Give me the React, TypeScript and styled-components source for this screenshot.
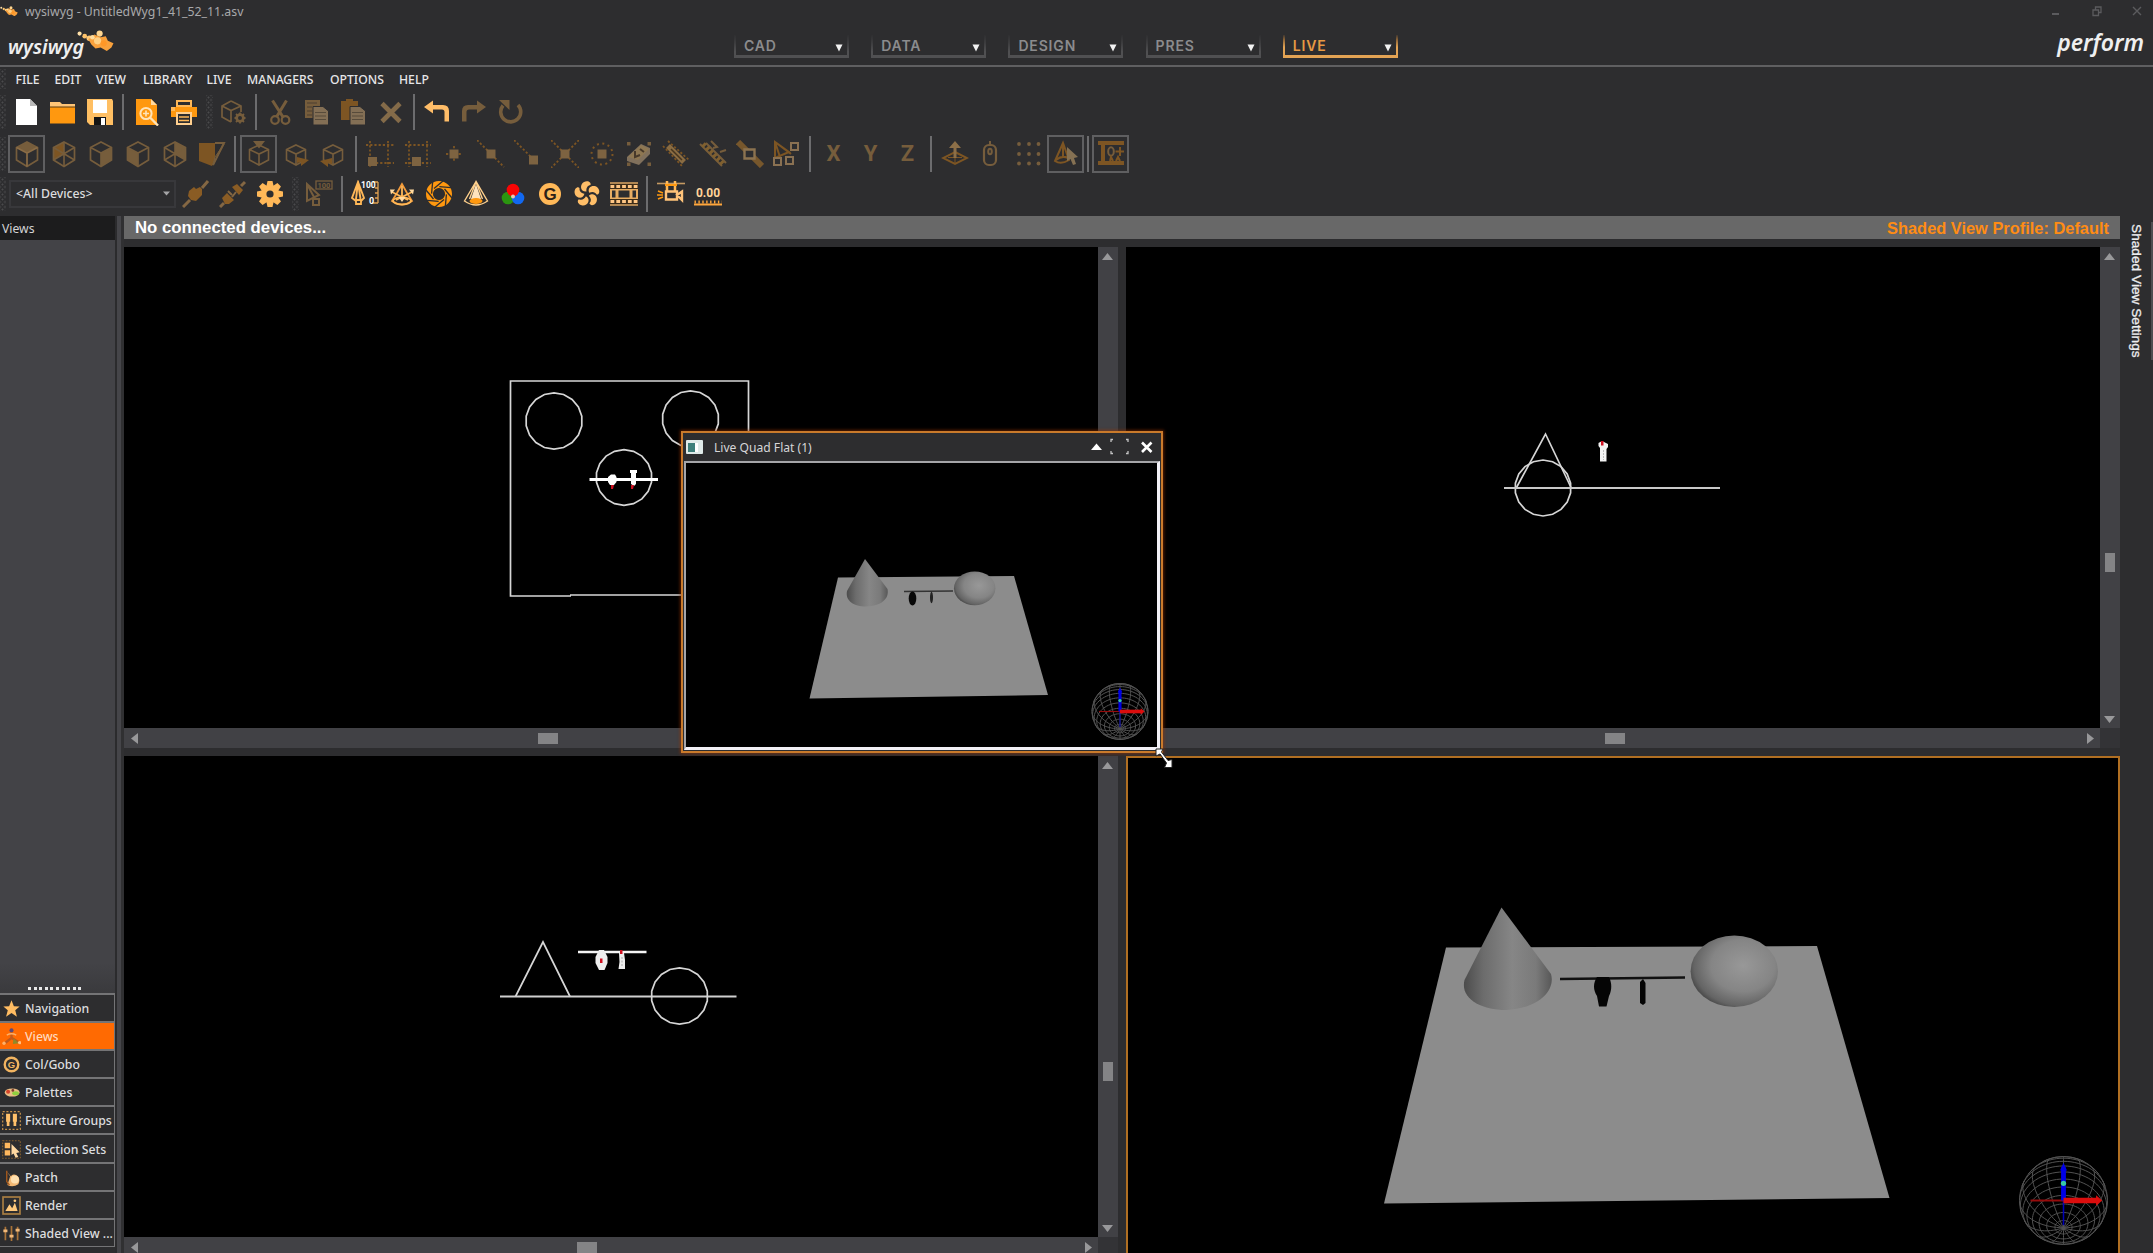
import React from "react";
import styled, { createGlobalStyle, css } from "styled-components";

const UI = `"Noto Sans", "Open Sans", sans-serif`;
const ARIAL = `"Liberation Sans", Arial, sans-serif`;
const BG = "#2d2d2f";
const BRIGHT = "#ff980f";
const PALE = "#ffb858";
const DIM = "#765d3c";
const RUST = "#7d5523";

const GlobalStyle = createGlobalStyle`
  *, *::before, *::after { box-sizing: border-box; }
  body { margin: 0; background: ${BG}; overflow: hidden; }
`;

const AppFrame = styled.div`
  display: flex;
  flex-direction: column;
  width: 2153px;
  height: 1253px;
  overflow: hidden;
  background: ${BG};
  color: #e4e4e6;
  font-family: ${UI};
  position: relative;
`;

/* ---------- header ---------- */
const TitleBar = styled.div`
  height: 23px;
  flex: none;
  display: flex;
  align-items: center;
  justify-content: space-between;
  padding-right: 10px;
  padding-bottom: 1px;
  color: #a9a9ab;
  font-size: 12.3px;
`;
const TitleLeft = styled.div`
  display: flex;
  align-items: center;
  gap: 7px;
`;
const WindowButtons = styled.div`
  display: flex;
  gap: 29px;
  color: #5b5b5e;
`;
const BrandBar = styled.div`
  height: 44px;
  flex: none;
  display: flex;
  justify-content: space-between;
  border-bottom: 2px solid #5f5f61;
  padding: 0 9px 0 8px;
`;
const Logo = styled.div`
  display: flex;
  width: 121px;
  svg { flex: none; margin: 7px 0 0 -7px; }
`;
const LogoText = styled.span<{ $size: number; $top: number }>`
  font-style: italic;
  font-weight: 600;
  font-size: ${(p) => p.$size}px;
  line-height: 26px;
  padding-top: ${(p) => p.$top}px;
  color: #efefef;
`;
const Tabs = styled.div`
  display: flex;
  gap: 22.2px;
  margin-left: 75px;
  margin-right: auto;
  padding: 12px 0 0 530px;
`;
const Tab = styled.div<{ $active?: boolean }>`
  width: 115px;
  height: 23px;
  padding: 0 4px 0 8px;
  display: flex;
  align-items: center;
  justify-content: space-between;
  border: solid ${(p) => (p.$active ? "#e0a050" : "#4c4c4e")};
  border-width: 0 2px 3px 2px;
  border-image: ${(p) =>
    p.$active
      ? "linear-gradient(to top, #e3a354 40%, #8a6236 75%, transparent) 1"
      : "linear-gradient(to top, #505052 20%, #3c3c3e 60%, transparent) 1"};
  color: ${(p) => (p.$active ? "#e79a43" : "#8b8b8d")};
  font-family: Inter, sans-serif;
  font-weight: 600;
  font-size: 14px;
  letter-spacing: 0.85px;
  svg { margin-top: 5px; }
`;

/* ---------- menus and toolbars ---------- */
const gripDots = css`
  background-image: radial-gradient(circle, #4a4a4c 0.9px, transparent 1.1px),
    radial-gradient(circle, #4a4a4c 0.9px, transparent 1.1px);
  background-size: 5px 5px;
  background-position: 0 0, 2.5px 2.5px;
`;
const MenuBar = styled.div`
  height: 24px;
  flex: none;
  display: flex;
  align-items: center;
`;
const MenuItem = styled.span<{ $w: number }>`
  width: ${(p) => p.$w}px;
  font-size: 12.2px;
  font-weight: 500;
  color: #e6e6e8;
`;
const Toolbar = styled.div<{ $h: number }>`
  height: ${(p) => p.$h}px;
  flex: none;
  display: flex;
  align-items: center;
`;
const EdgeGrip = styled.div<{ $h: number; $gap: number }>`
  width: 6px;
  height: ${(p) => p.$h}px;
  margin-right: ${(p) => p.$gap}px;
  ${gripDots}
`;
const Grip = styled.div`
  width: 7px;
  height: 34px;
  margin: 0 1px 0 4px;
  ${gripDots}
`;
const Sep = styled.div<{ $w?: number }>`
  width: ${(p) => p.$w ?? 10}px;
  height: 36px;
  display: flex;
  justify-content: center;
  &::after { content: ""; width: 2px; background: #6c6c6e; }
`;
const ToolButton = styled.div<{ $boxed?: boolean }>`
  width: 37px;
  height: 38px;
  flex: none;
  display: flex;
  align-items: center;
  justify-content: center;
  ${(p) => p.$boxed && css`box-shadow: inset 0 0 0 2px #5f5f61;`}
`;
const DeviceSelect = styled.div`
  width: 167px;
  height: 28px;
  border: 2px solid #38383b;
  display: flex;
  align-items: center;
  justify-content: space-between;
  padding: 0 4px 0 5px;
  font-size: 12.3px;
  font-weight: 500;
  color: #dcdcde;
  margin-right: 1px;
`;
const ToolbarFoot = styled.div`
  height: 3px;
  flex: none;
`;

/* ---------- work area ---------- */
const Work = styled.div`
  flex: 1;
  min-height: 0;
  display: flex;
`;
const Sidebar = styled.div`
  width: 115px;
  flex: none;
  display: flex;
  flex-direction: column;
  background: #434347;
`;
const SidebarTitle = styled.div`
  height: 24px;
  background: #1c1c1d;
  padding-left: 2px;
  font-size: 12.2px;
  line-height: 26px;
  color: #d4d4d6;
`;
const SidebarBody = styled.div`
  flex: 1;
  display: flex;
  align-items: flex-end;
  padding: 0 0 3px 27px;
  background: linear-gradient(#434347 96%, #3a3a3d);
`;
const Dots = styled.div`
  width: 55px;
  height: 3px;
  background: repeating-linear-gradient(90deg, transparent 0 1px, #e8e8e8 1px 4px, transparent 4px 5.6px);
`;
const NavList = styled.div`
  height: 254px;
  border: solid #747476;
  border-width: 2px 1px 0 0;
  flex: none;
`;
const NavRow = styled.div<{ $active?: boolean }>`
  height: 28.1px;
  display: flex;
  align-items: center;
  gap: 4px;
  padding: 1px 0 0 2px;
  border-bottom: 2px solid #747476;
  background: ${(p) => (p.$active ? "#ff6a02" : BG)};
  color: ${(p) => (p.$active ? "#ffd9bd" : "#dddddf")};
  font-size: 12.3px;
  font-weight: 500;
  white-space: nowrap;
  overflow: hidden;
`;
const SidebarFoot = styled.div`
  height: 6px;
  background: ${BG};
`;
const Splitter = styled.div`
  width: 9px;
  flex: none;
  background: linear-gradient(90deg, #2b2b2d 0 2px, #454549 2px 6px, #303032 6px);
`;
const Main = styled.div`
  width: 1996px;
  flex: none;
  display: flex;
  flex-direction: column;
  gap: 8px;
`;
const StatusBar = styled.div`
  height: 23px;
  flex: none;
  display: flex;
  align-items: center;
  justify-content: space-between;
  padding: 1px 11px 0;
  background: #686868;
  font-family: ${ARIAL};
  font-weight: 700;
  font-size: 16.8px;
  color: #ffffff;
`;
const ProfileLabel = styled.span`
  color: #ff8c14;
  font-size: 16.4px;
`;
const Quad = styled.div`
  display: grid;
  grid-template-columns: 994px 994px;
  grid-template-rows: 501px 501px;
  gap: 8px;
`;
const Pane = styled.div`
  display: grid;
  grid-template-columns: 974px 20px;
  grid-template-rows: 1fr 20px;
  background: #333336;
  overflow: hidden;
`;
const ActivePane = styled.div`
  border: 2px solid #b06f22;
  background: #000;
  overflow: hidden;
`;
const Canvas = styled.svg`
  display: block;
  background: #000;
`;
const VScroll = styled.div`
  background: #414145;
  display: flex;
  flex-direction: column;
  align-items: center;
  padding: 6px 1px 5px 0;
`;
const HScroll = styled.div`
  background: #414145;
  display: flex;
  align-items: center;
  padding: 0 6px 0 7px;
`;
const Thumb = styled.div<{ $w: number; $h: number }>`
  width: ${(p) => p.$w}px;
  height: ${(p) => p.$h}px;
  flex: none;
  background: #848486;
`;
const Space = styled.div<{ $n?: number }>`
  flex: ${(p) => (p.$n === undefined ? "1" : `0 0 ${p.$n}px`)};
`;
const RightRail = styled.div`
  flex: 1;
  display: flex;
  justify-content: space-between;
  padding: 6px 0 0 7px;
`;
const RailTab = styled.div`
  writing-mode: vertical-rl;
  font-family: ${ARIAL};
  font-size: 13.7px;
  line-height: 18px;
  height: 140px;
  padding-top: 2px;
  color: #eeeeef;
  -webkit-text-stroke: 0.3px #eeeeef;
`;
const RailEdge = styled.div`
  width: 2px;
  height: 138px;
  background: #4e4e51;
`;

/* ---------- floating window ---------- */
const Floating = styled.div`
  position: absolute;
  left: 681px;
  top: 431px;
  width: 482px;
  height: 322px;
  border: 2px solid #c97a2b;
  background: ${BG};
  box-shadow: 0 0 3px 1px rgba(150, 50, 0, 0.6);
  padding: 0 1px 1px 1px;
`;
const FloatTitle = styled.div`
  height: 28px;
  display: flex;
  align-items: center;
  padding: 0 5px 1px 2px;
  font-size: 12.1px;
  color: #d6d6d8;
  span { margin: 1px auto 0 11px; }
`;
const FloatBody = styled.div`
  height: 289px;
  border: solid #a5a5a8;
  border-width: 2px 3px 3px 2px;
  border-right-color: #f2f0f6;
  border-bottom-color: #f2f0f6;
  background: #000;
  overflow: hidden;
`;
const Pointer = styled.svg`
  position: absolute;
  left: 1155px;
  top: 748px;
`;

/* ---------- icon drawings ---------- */
const Svg = ({ children, s = 28 }: { children: React.ReactNode; s?: number }) => (
  <svg width={s} height={s} viewBox="0 0 28 28" fill="none">{children}</svg>
);
const HEX = "M14 2L24.5 7.5V20L14 26.5L3.5 20V7.5Z";
const FACE: Record<string, string> = {
  top: "M14 2L24.5 7.5L14 12.5L3.5 7.5Z",
  right: "M14 13L24.5 7.5V20L14 26.5Z",
  left: "M14 13L3.5 7.5V20L14 26.5Z",
  backLeft: "M14 2L3.5 7.5V20L14 14.5Z",
  backRight: "M14 2L24.5 7.5V20L14 14.5Z",
};
const Cube = ({ face, back }: { face?: string; back?: boolean }) => (
  <Svg>
    {face && <path d={FACE[face]} fill={face === "backLeft" ? RUST : DIM} />}
    <path d={HEX} stroke={DIM} strokeWidth="1.7" />
    {back ? (
      <path d="M14 2V26.5M3.5 20L24.5 7.5M3.5 7.5L24.5 20" stroke={DIM} strokeWidth="1.6" />
    ) : (
      <path d="M3.5 7.5L14 13L24.5 7.5M14 13V26.5" stroke={face === "top" ? "#8a6c46" : DIM} strokeWidth="1.7" />
    )}
  </Svg>
);
const SmallCube = ({ children }: { children?: React.ReactNode }) => (
  <Svg>
    <path d="M14 5L23.5 9.5V20L14 25L4.5 20V9.5ZM4.5 9.5L14 14L23.5 9.5M14 14V25" stroke={DIM} strokeWidth="1.6" />
    {children}
  </Svg>
);
const dash = { stroke: RUST, strokeWidth: 1.8, strokeDasharray: "2.2 2" };
const Letter = styled.span`
  font-family: Roboto, sans-serif;
  font-weight: 700;
  font-size: 22px;
  line-height: 37px;
  color: ${DIM};
`;

const I: Record<string, React.ReactNode> = {
  fresh: <Svg><path d="M4 1H18L25 8V27H4Z" fill="#fff" /><path d="M18 1V8H25Z" fill="#b9b9b9" /></Svg>,
  open: <Svg><path d="M1 4H11L13 6H26V10H1Z" fill="#ffc577" /><path d="M1 9H26V25.5H1Z" fill={BRIGHT} /><path d="M1 9H26" stroke="#5a3a10" strokeWidth="1" /></Svg>,
  save: <Svg><path d="M1 1H26L27 3V27H4L1 24Z" fill="#ffbf63" /><path d="M7 2H21V15H7Z" fill="#fff" /><path d="M8 19H20V27H8Z" fill="#141414" /><path d="M15 20H19V27H15Z" fill="#fff" /></Svg>,
  preview: <Svg><path d="M3 1H18L24 7V27H3Z" fill={BRIGHT} /><path d="M18 1V7H24Z" fill="#ffd9a0" /><circle cx="13" cy="15.5" r="5.6" stroke="#ffe3b8" strokeWidth="2" /><path d="M13 12.5V18.5M10 15.5H16" stroke="#ffe3b8" strokeWidth="1.6" /><path d="M17 19.5L25 27.5" stroke="#ffe3b8" strokeWidth="2.4" /></Svg>,
  print: <Svg><path d="M7 3H21V8H7Z" stroke={PALE} strokeWidth="2" fill={BG} /><path d="M1 9H27V19H1Z" fill={BRIGHT} /><path d="M1 9H5V13H1Z" fill={PALE} /><path d="M7 15H21V26H7Z" fill={BG} stroke="#ffcf8f" strokeWidth="2" /><path d="M9 19H19M9 22.5H19" stroke={PALE} strokeWidth="1.3" /></Svg>,
  cubegear: <Svg><path d="M12 3L22 8V14M12 3L3 8V19L12 24M3 8L12 12.5L22 8M12 12.5V24" stroke={DIM} strokeWidth="1.7" /><circle cx="21" cy="20" r="3.5" stroke={DIM} strokeWidth="2.4" /><path d="M21 14.5V25.5M15.5 20H26.5M17 16L25 24M25 16L17 24" stroke={DIM} strokeWidth="1.8" /><circle cx="21" cy="20" r="2" fill={BG} /></Svg>,
  cut: <Svg><path d="M6.5 2.5L17 19M20.5 2.5L10.5 19" stroke={DIM} strokeWidth="3" /><circle cx="9" cy="22" r="3.8" stroke={DIM} strokeWidth="2.2" /><circle cx="19.5" cy="22" r="3.8" stroke={DIM} strokeWidth="2.2" /></Svg>,
  copy: <Svg><path d="M2 2H17V8H10V20H2Z" fill={DIM} /><path d="M4 5H14M4 9H9M4 13H9M4 17H9" stroke="#4b3f30" /><path d="M10 8.500H20L25.500 13V27H10Z" fill="#836f55" stroke={BG} /><path d="M12 14.500H23M12 18H23M12 21.500H23" stroke="#574b3b" strokeWidth="1.2" /></Svg>,
  paste: <Svg><path d="M1 3H6V1H13V3H18V8H11V22H1Z" fill={RUST} /><path d="M10 8.500H20L25.500 13V27H10Z" fill="#836f55" stroke={BG} /><path d="M12 14.500H23M12 18H23M12 21.500H23" stroke="#574b3b" strokeWidth="1.2" /></Svg>,
  del: <Svg><path d="M5 5.500L23 23.500M23 5.500L5 23.500" stroke="#846b49" strokeWidth="4.6" /></Svg>,
  undo: <Svg><path d="M1 9L10 2.500V7H20Q26 7 26 13V23.500H21.500V14Q21.500 11.500 19 11.500H10V15.500Z" fill="#ffbd68" /></Svg>,
  redo: <Svg><path d="M26 9L17 2.500V7H8Q2 7 2 13V23.500H6.500V14Q6.500 11.500 9 11.500H17V15.500Z" fill={DIM} /></Svg>,
  reload: <Svg><path d="M6 7.500A10 10 0 1 0 21 7" stroke={DIM} strokeWidth="3.6" /><path d="M2 2H12.500V12Z" fill={DIM} /></Svg>,
  solid: <Svg><path d="M1 3H17V21L14 26L1 21Z" fill={RUST} /><path d="M17 3H26L15 25" stroke={DIM} strokeWidth="2" /><path d="M17 17L15 25L26 4Z" stroke={DIM} /></Svg>,
  viewTop: <SmallCube><path d="M8 1H20L14 8.500Z" fill={DIM} /></SmallCube>,
  viewFront: <SmallCube><path d="M15 17L27 20L19 26V22L15 23Z" fill={RUST} /></SmallCube>,
  viewSide: <SmallCube><path d="M13 18L1 21L9 27V23L13 24Z" fill={RUST} /></SmallCube>,
  boxA: <Svg><path d="M4 1V27M22 1V27M0 5H28M10 23H28" {...dash} /><path d="M2 17H11V26H2Z" fill="#7d6341" /></Svg>,
  boxB: <Svg><path d="M6 1V27M24 1V27M2 5H28M2 23H28" {...dash} /><path d="M9 17H18V26H9Z" fill="#7d6341" /></Svg>,
  snapPt: <Svg><path d="M14 6V22M6 14H22" {...dash} /><path d="M9.500 9.500H18.500V18.500H9.500Z" fill="#7d6341" /></Svg>,
  snapLine: <Svg><path d="M0 0L27 27" {...dash} /><path d="M9.500 9.500H18.500V18.500H9.500Z" fill="#7d6341" /></Svg>,
  snapEnd: <Svg><path d="M0 0L20 20" {...dash} /><path d="M15 15.500H24V24.500H15Z" fill="#7d6341" /></Svg>,
  snapX: <Svg><path d="M0 0L28 28M28 0L0 28" {...dash} /><path d="M9.500 9.500H18.500V18.500H9.500Z" fill="#7d6341" /></Svg>,
  snapC: <Svg><circle cx="14" cy="14" r="10.500" stroke={RUST} strokeWidth="2" strokeDasharray="2 3.500" /><path d="M9.500 9.500H18.500V18.500H9.500Z" fill="#7d6341" /></Svg>,
  grab: <Svg><path d="M2 2H5.500V5.500H2ZM22.500 2H26V5.500H22.500ZM2 22.500H5.500V26H2ZM22.500 22.500H26V26H22.500Z" fill={DIM} /><path d="M2 17L16 4L25 8V14L14 25L2 21Z" fill="#80705c" /><path d="M3 17L16 5L24 9L13 20Z" fill="#8e7752" /><path d="M10 11L10 17L15 15M15 9L19 12" stroke="#47392a" strokeWidth="2" /></Svg>,
  pen: <Svg><path d="M6 6L22 22" stroke="#8a6c42" strokeWidth="5.500" /><path d="M9 9L20 20" stroke="#46351e" strokeWidth="1.500" /><path d="M6 1L27 20M1 6L20 26" {...dash} /></Svg>,
  truss: <Svg><path d="M1 4L23 26M7 3L27 23M12 1L18 7L14 8M27 10L21 12" stroke={DIM} strokeWidth="2" /><path d="M4 4L24 24" stroke="#80602f" strokeWidth="5" strokeDasharray="3 2" /></Svg>,
  pipe: <Svg><path d="M2 2L26 26" stroke="#77572c" strokeWidth="6" /><path d="M8.500 9.500H18.500V18.500H8.500Z" stroke="#8c7350" strokeWidth="2.400" fill={BG} /></Svg>,
  shape: <Svg><path d="M2 2V18L16 12ZM2 2L8 20M2 2L18 14" stroke={RUST} strokeWidth="2" /><path d="M18 3H25V10H18ZM1 18H8V25H1ZM13 17H20V24H13Z" stroke="#8a7152" strokeWidth="2" fill={BG} /></Svg>,
  lift: <Svg><path d="M14 12L26 18L14 24L2 18Z" stroke={RUST} strokeWidth="2" /><path d="M7 17.500H21M14 12V24" stroke={RUST} /><path d="M14 1L20 8H15.500V18H12.500V8H8Z" fill="#8c6f48" /></Svg>,
  mouse: <Svg><rect x="6" y="5" width="12" height="20" rx="5" stroke={DIM} strokeWidth="2.200" /><path d="M12 1V5" stroke={DIM} strokeWidth="2" /><ellipse cx="12" cy="11.500" rx="1.800" ry="2.800" stroke={DIM} strokeWidth="2" /></Svg>,
  grid: <Svg>{[4, 14, 23.500].map((y) => [4, 14, 23.500].map((x) => <circle key={`${x}-${y}`} cx={x} cy={y} r="1.900" fill={DIM} />))}</Svg>,
  pickCone: <Svg><path d="M11 3L3 21Q9 25 17 20ZM11 3V17M4 20Q10 15 16 18" stroke={RUST} strokeWidth="2" /><path d="M15 7L26 17L22 18L24 24L21 25L18.500 19L15 21Z" fill="#857153" /></Svg>,
  stage: <Svg><path d="M1 1H27V5H8V21H27V25H1V21H4V5H1Z" fill={RUST} /><ellipse cx="14" cy="11.500" rx="2.800" ry="4.200" stroke={DIM} strokeWidth="2" /><path d="M23 7V16M18.500 11.500H27M13 21L14 17L16 21M19 21L21 17L23 21" stroke={RUST} strokeWidth="2" /></Svg>,
  plug: <Svg><path d="M1 27L8 20M20 8L26 1" stroke="#846743" strokeWidth="3" /><path d="M7 11L12 7L14 9L18 7L20 9V15L14 21L9 20L6 16Z" fill="#8a5c24" /></Svg>,
  unplug: <Svg><path d="M1 27L5 23M22 6L26 2" stroke="#846743" strokeWidth="3" /><path d="M13 7L18 4L24 10L20 15ZM3 18L8 13L15 20L10 24H6Z" fill="#8a5c24" /><path d="M9 11L13 15M13 17L17 12" stroke="#846743" strokeWidth="2" /></Svg>,
  gear: <Svg>{[0, 45, 90, 135, 180, 225, 270, 315].map((a) => <path key={a} d="M11.500 1H16.500L18 8H10Z" fill={PALE} transform={`rotate(${a} 14 14)`} />)}<circle cx="14" cy="14" r="9" fill={PALE} /><circle cx="14" cy="14" r="3.600" fill={BG} /></Svg>,
  cursor100: <Svg><path d="M2 4V21L14 15ZM2 4L10 19" stroke={DIM} strokeWidth="2" /><path d="M8 19H14V25H8Z" stroke={DIM} strokeWidth="2" /><rect x="11" y="1" width="16" height="8" stroke={DIM} strokeWidth="1.300" /><text x="12.500" y="7.800" fontSize="7.500" fontFamily="Roboto" fontWeight="700" fill={DIM}>100</text></Svg>,
  intensity: <svg width="30" height="28" viewBox="0 0 30 28" fill="none"><path d="M8 2L2 18L6 21H11L14 18ZM8 2L6 19M8 2L10.500 19" stroke={PALE} strokeWidth="1.900" /><path d="M6 20H11V24H6Z" stroke={PALE} strokeWidth="1.800" fill={BG} /><path d="M28 2V23M23 2H28M25 8H28M25 13H28M25 18H28M22 23H28" stroke="#e0a050" strokeWidth="1.300" /><text x="11" y="8" fontSize="8.500" fontFamily="Roboto" fontWeight="700" fill="#fff">100</text><text x="19" y="24" fontSize="9" fontFamily="Roboto" fontWeight="700" fill="#fff">0</text></svg>,
  pan: <Svg><path d="M14 4L9 13L4 21Q14 28 24 21L19 13Z" stroke="#f29a3a" strokeWidth="1.800" /><ellipse cx="14" cy="21" rx="9" ry="3.600" stroke={PALE} strokeWidth="1.700" /><path d="M4 12L20 20M24 12L8 20M14 6V19" stroke={PALE} strokeWidth="1.800" /><path d="M2 9.500H7L3 14.500ZM26 9.500H21L25 14.500ZM10.500 17H17.500L14 22Z" fill="#ffd9a0" /></Svg>,
  iris: <Svg><circle cx="14" cy="14" r="9.500" stroke={BRIGHT} strokeWidth="7" />{[0, 45, 90, 135, 180, 225, 270, 315].map((a) => <path key={a} d="M9 8.500L18 1" stroke={BG} strokeWidth="1.300" transform={`rotate(${a} 14 14)`} />)}<circle cx="14" cy="14" r="5.600" fill={BG} /></Svg>,
  beam: <Svg><path d="M14 4L9 19Q14 24 19 19Z" fill="#ffe3bd" /><path d="M14 1.500L2.500 21Q14 29 25.500 21ZM14 2L7.500 19M14 2L20.500 19" stroke="#ffd08c" strokeWidth="1.400" /><ellipse cx="14" cy="21" rx="6.500" ry="3" fill={BRIGHT} /></Svg>,
  rgb: <Svg><circle cx="9" cy="18" r="6.300" fill="#2b9610" /><circle cx="19" cy="18" r="6.300" fill="#1268f0" /><circle cx="14" cy="10" r="6.300" fill="#f90505" /><circle cx="14" cy="16.500" r="2" fill="#e9c8b0" /></Svg>,
  gobo: <Svg><circle cx="14" cy="14" r="11" fill={PALE} /><text x="14" y="20.200" textAnchor="middle" fontSize="17" fontFamily="Liberation Sans" fontWeight="700" fill="#2b2118">G</text></Svg>,
  fan: <Svg>{[0, 72, 144, 216, 288].map((a) => <path key={a} d="M13.500 11.500C7 12 6.500 4.500 11 2C15 0 18.500 2.500 17.500 5C14.500 5.500 13 8 13.500 11.500Z" fill="#ffbe68" transform={`rotate(${a} 14 14)`} />)}</Svg>,
  film: <svg width="30" height="28" viewBox="0 0 30 28" fill="none"><path d="M1 2.500H29V25.500H1Z" fill="#3c2c18" /><path d="M1 3H29M1 25H29" stroke="#d9a566" strokeWidth="1.600" /><path d="M1.500 6.500H29M1.500 21.500H29" stroke="#ffc684" strokeWidth="3.200" strokeDasharray="3.800 2" /><path d="M1 9H29V19H1Z" fill="#e8ad62" /><path d="M9.500 10.500H20.500V17.500H9.500ZM3 10.500H6.500V17.500H3ZM23.500 10.500H27V17.500H23.500Z" fill={BG} /></svg>,
  camera: <Svg><path d="M0 3.500H28" stroke="#c59a62" strokeWidth="1.600" /><path d="M10 1V12M18 1V12" stroke={PALE} strokeWidth="2.500" /><path d="M8 5H20" stroke={BRIGHT} strokeWidth="2" /><path d="M9 11.500H20V19.500H9ZM20 15L25 11.500V20Z" stroke="#ffc37a" strokeWidth="2.400" /><path d="M1 11L6 13M0 15H6M1 19L6 17" stroke={BRIGHT} strokeWidth="1.600" /></Svg>,
  number: <Svg><text x="14" y="17" textAnchor="middle" fontSize="12" fontFamily="Roboto" fontWeight="700" fill="#ffd39a">0.00</text><path d="M0 24.500H28" stroke="#ffa63c" strokeWidth="2" /><path d="M0.500 22H28" stroke="#ffa63c" strokeWidth="3" strokeDasharray="1.400 2.500" /></Svg>,
};

/* pixel swarm next to the product name */
const Swarm = ({ w }: { w: number }) => (
  <svg width={w} height={w * 0.6} viewBox="0 0 36 21.6">
    <circle cx="2.500" cy="3.500" r="2" fill="#ffe0a8" /><circle cx="7.500" cy="6" r="2.300" fill="#ffc36a" />
    <circle cx="22" cy="3.500" r="3" fill="#ffd690" /><circle cx="12" cy="8" r="2.700" fill="#ffca78" />
    <path d="M11 9L17 4.500L23 7L28 6L30 10.500L35.500 13L33.500 17L29 20.500L23 17L18 18L14 14Z" fill="#f9a13c" />
    <circle cx="20" cy="10.500" r="3.500" fill="#ffd084" /><circle cx="26" cy="13" r="3" fill="#ff9727" /><circle cx="15" cy="7" r="2.200" fill="#ffdc9c" />
  </svg>
);

const navIcons: React.ReactNode[] = [
  <path d="M14 2L17.500 10.500L26 11L19.500 16.500L22 26L14 20.500L6 26L8.500 16.500L2 11L10.500 10.500Z" fill="#ffbc62" />,
  <g><circle cx="14" cy="5" r="3" fill="#5b4a78" /><path d="M14 8V16L4 24M14 16L24 22" stroke="#c05a1c" strokeWidth="3.500" /><path d="M7 12Q14 8 21 12" stroke="#ffb066" strokeWidth="2" /><path d="M17 17L25 24L16 25Z" fill="#8f8a2a" /><circle cx="3" cy="24" r="2.500" fill="#ffb066" /><circle cx="26" cy="23" r="2.500" fill="#ffc080" /></g>,
  <g><circle cx="14" cy="14" r="10" stroke="#f2b460" strokeWidth="3.500" /><text x="14" y="19" textAnchor="middle" fontSize="14" fontFamily="Liberation Sans" fontWeight="700" fill="#f2b460">G</text></g>,
  <g><ellipse cx="15" cy="14" rx="11" ry="6" fill="#e9bd84" /><circle cx="9" cy="13" r="3" fill="#d6442a" /><ellipse cx="20" cy="15" rx="5" ry="3" fill="#8fcf3f" /><circle cx="16" cy="11" r="2" fill="#7d3b2a" /></g>,
  <g><rect x="1" y="1" width="26" height="26" stroke="#c48f4a" strokeWidth="1.800" strokeDasharray="3 2.500" /><path d="M6 4H12V16H11V22H7V16H6ZM16 4H22V16H21V22H17V16H16Z" fill="#ffc06a" /></g>,
  <g><rect x="1" y="1" width="26" height="26" stroke="#86602f" strokeWidth="1.600" strokeDasharray="2.500 2" /><path d="M4 4H12V12H4ZM4 15H12V23H4Z" fill="#ffb85e" /><path d="M14 6L26 18L21 19L24 25L20 26L17 20L14 22Z" fill="#ffd8a0" /></g>,
  <g><path d="M7 5L12 12L8 25Q16 29 24 24Q28 16 22 11Q16 8 13 12" fill="#f3b873" /><circle cx="19" cy="17" r="6" fill="#ffe0b0" /><path d="M7 4V20L11 25" stroke="#a85a1c" strokeWidth="2" /></g>,
  <g><rect x="1.500" y="1.500" width="25" height="25" stroke="#a87d42" strokeWidth="2.500" /><path d="M5 22L11 12L15 18L19 10L23 22Z" fill="#ffc97c" /><circle cx="19" cy="7" r="2" fill="#ffc97c" /></g>,
  <g stroke="#a87238" strokeWidth="2.500"><path d="M5 4V24M14 3V25M23 4V24" /><path d="M2 10H8M11 18H17M20 9H26" strokeWidth="4" stroke="#f2b878" /></g>,
];
const navLabels = ["Navigation", "Views", "Col/Gobo", "Palettes", "Fixture Groups", "Selection Sets", "Patch", "Render", "Shaded View ..."];

/* ---------- scroll arrows ---------- */
const arrowPath: Record<string, string> = {
  up: "M0 7L5.500 0L11 7Z",
  down: "M0 0L5.500 7L11 0Z",
  left: "M7 0L0 5.500L7 11Z",
  right: "M0 0L7 5.500L0 11Z",
};
const Arrow = ({ dir }: { dir: string }) => {
  const tall = dir === "left" || dir === "right";
  return (
    <svg width={tall ? 7 : 11} height={tall ? 11 : 7}>
      <path d={arrowPath[dir]} fill="#98989a" />
    </svg>
  );
};

/* ---------- 3D drawings ---------- */
type Point = { x: number; y: number; z: number };
const SIN = 0.62;
const COS = Math.sqrt(1 - SIN * SIN);

/* screen y grows downward, so the visible pole lands below the centre */
const project = (lat: number, lon: number): Point => {
  const x = Math.cos(lat) * Math.sin(lon);
  const up = Math.sin(lat);
  const out = Math.cos(lat) * Math.cos(lon);
  return { x, y: SIN * up - COS * out, z: COS * up + SIN * out };
};
const toPath = (pts: Point[]) => {
  let d = "";
  let pen = false;
  pts.forEach((p) => {
    if (p.z < -0.02) { pen = false; return; }
    d += `${pen ? "L" : "M"}${p.x.toFixed(3)} ${p.y.toFixed(3)}`;
    pen = true;
  });
  return d;
};
const steps = Array.from({ length: 73 }, (_, i) => (i / 72) * Math.PI * 2);
const rings = Array.from({ length: 15 }, (_, i) => -Math.PI / 2 + ((i + 1) * Math.PI) / 16)
  .map((lat) => toPath(steps.map((lon) => project(lat, lon))));
const meridians = Array.from({ length: 16 }, (_, i) => (i * Math.PI) / 8)
  .map((lon) => toPath(Array.from({ length: 40 }, (_, k) => project(-Math.PI / 2 + (k * Math.PI) / 39, lon))));

const Globe = ({ cx, cy, r }: { cx: number; cy: number; r: number }) => (
  <g transform={`translate(${cx} ${cy}) scale(${r})`} fill="none">
    <g stroke="#525252" strokeWidth={1 / r}>
      {rings.map((d, i) => <path key={`r${i}`} d={d} />)}
      {meridians.map((d, i) => <path key={`m${i}`} d={d} />)}
      <circle r="1" />
    </g>
    <path d="M0 0V0.560" stroke="#0000b8" strokeWidth="0.035" />
    <path d="M-0.750 0H0" stroke="#960b0b" strokeWidth="0.040" />
    <path d="M0 0V-0.750" stroke="#0000e6" strokeWidth="0.110" />
    <path d="M-0.080 -0.680L0 -0.860L0.080 -0.680Z" fill="#0000e6" />
    <path d="M0 0H0.760" stroke="#dc0d0d" strokeWidth="0.130" />
    <path d="M0.740 -0.120L0.880 0L0.740 0.120Z" fill="#dc0d0d" />
    <circle cy="-0.390" r="0.060" fill="#38c8a8" />
  </g>
);
const Gradients = () => (
  <defs>
    <linearGradient id="cone" x1="0" x2="1" y1="0" y2="0">
      <stop offset="0" stopColor="#4c4c4c" /><stop offset="0.220" stopColor="#6c6c6c" />
      <stop offset="0.550" stopColor="#868686" /><stop offset="0.820" stopColor="#7a7a7a" /><stop offset="1" stopColor="#585858" />
    </linearGradient>
    <radialGradient id="ball" cx="0.600" cy="0.420" r="0.660">
      <stop offset="0" stopColor="#989898" /><stop offset="0.550" stopColor="#858585" />
      <stop offset="0.850" stopColor="#646464" /><stop offset="1" stopColor="#3c3c3c" />
    </radialGradient>
  </defs>
);
const polygon = (cx: number, cy: number, r: number, n = 18) =>
  Array.from({ length: n }, (_, i) => {
    const a = ((i + 0.5) / n) * Math.PI * 2;
    return `${(cx + r * Math.cos(a)).toFixed(1)},${(cy + r * Math.sin(a)).toFixed(1)}`;
  }).join(" ");
const wire = { fill: "none", stroke: "#d6d6d6", strokeWidth: 1.7 };

const PlanView = () => (
  <Canvas width="974" height="481" viewBox="124 247 974 481">
    <path d="M570 595H748.500V381H510.500V596H571" {...wire} />
    <polygon points={polygon(554, 421, 28.200)} {...wire} />
    <polygon points={polygon(690.5, 419, 28.200)} {...wire} />
    <polygon points={polygon(624, 477.500, 27.900)} {...wire} />
    <path d="M589.500 479.500H658" stroke="#fff" strokeWidth="3" />
    <path d="M608 477L611 474.500H615L616.500 477V482L614 485H610L608 482ZM630 470H637V473H636V484L634 486L631 484V473H630Z" fill="#fff" />
    <path d="M611 485H614L613 489H611ZM631 485H634L633 489H631Z" fill="#cc1020" />
  </Canvas>
);
const SideView = () => (
  <Canvas width="974" height="481" viewBox="1126 247 974 481">
    <path d="M1516.500 487.500L1545.500 434L1571 487.500" {...wire} />
    <polygon points={polygon(1543, 488, 28)} {...wire} />
    <path d="M1504 488H1720" stroke="#c8c8c8" strokeWidth="2" />
    <path d="M1598.500 443L1602 441L1608 444V447L1606.500 449V461.500H1600V448L1598.500 446Z" fill="#f2f2f2" />
    <path d="M1603.500 450V460" stroke="#bbb" strokeDasharray="2 1" />
    <path d="M1601 441H1603.500V445.500H1601Z" fill="#d01020" />
  </Canvas>
);
const FrontView = () => (
  <Canvas width="974" height="481" viewBox="124 756 974 481">
    <path d="M515.500 996.500L543 942L570 996.500" {...wire} />
    <path d="M500 996.500H736.500" stroke="#cfcfcf" strokeWidth="2" />
    <polygon points={polygon(679.500, 996, 28.200)} {...wire} />
    <path d="M578 952H646.500" stroke="#f4f4f4" strokeWidth="2.600" />
    <path d="M599 950H604L607.500 957V963L604.500 970H599L595.500 963V957Z" fill="#eee" />
    <path d="M619 953H624L625 960V969H618.500L619.500 962Z" fill="#eee" />
    <path d="M600 958.500H602.500V963H600ZM620 950H622.500V954H620Z" fill="#d01020" />
    <path d="M622 957V967" stroke="#aaa" strokeDasharray="2 1.500" />
  </Canvas>
);
const ShadedView = () => (
  <Canvas width="990" height="497" viewBox="1128 758 990 497">
    <Gradients />
    <path d="M1446 947.500L1817 946L1889.500 1198L1384 1203.500Z" fill="#8c8c8c" />
    <path d="M1501.500 907.500L1464.500 980C1460 998 1480 1010 1506 1010C1536 1009 1556 992 1551 974Z" fill="url(#cone)" />
    <path d="M1560 979L1685 977.500" stroke="#111" strokeWidth="2.300" />
    <path d="M1597 977H1609C1612 983 1612 990 1609 996L1606.500 1006.500H1599L1597 996C1593 990 1593 983 1597 977ZM1640 982L1643 979L1645.500 983V1003L1643 1005L1640 1003Z" fill="#050505" />
    <ellipse cx="1734.300" cy="971.300" rx="43.700" ry="35.800" fill="url(#ball)" />
    <Globe cx={2063.500} cy={1200.500} r={44} />
  </Canvas>
);
const MiniView = () => (
  <Canvas width="473" height="285" viewBox="686 463 473 285">
    <path d="M838 577.500L1014 576L1048 695L809.500 698.500Z" fill="#8c8c8c" />
    <path d="M865 559L847 591C845 601 854 606.500 866 606.500C881 606 889.500 599 887.500 589Z" fill="url(#cone)" />
    <path d="M904 591.500L953 591" stroke="#333" strokeWidth="1.500" />
    <ellipse cx="912.500" cy="598.500" rx="3.800" ry="7" fill="#080808" />
    <ellipse cx="931.500" cy="597.500" rx="1.500" ry="5.800" fill="#222" />
    <ellipse cx="974.700" cy="588.300" rx="20.700" ry="16.900" fill="url(#ball)" />
    <Globe cx={1120} cy={711.500} r={28} />
  </Canvas>
);

const Btn = ({ n, boxed }: { n: string; boxed?: boolean }) => <ToolButton $boxed={boxed}>{I[n]}</ToolButton>;
const Btns = ({ list }: { list: string[] }) => <>{list.map((n) => <Btn key={n} n={n} />)}</>;

const tabs = ["CAD", "DATA", "DESIGN", "PRES", "LIVE"];
const menus: [string, number][] = [["FILE", 39], ["EDIT", 41.500], ["VIEW", 47], ["LIBRARY", 63.500], ["LIVE", 40.500], ["MANAGERS", 83], ["OPTIONS", 69], ["HELP", 50]];

export default function App() {
  return (
    <AppFrame>
      <GlobalStyle />
      <TitleBar>
        <TitleLeft><Swarm w={18} /><span>wysiwyg - UntitledWyg1_41_52_11.asv</span></TitleLeft>
        <WindowButtons>
          <svg width="12" height="12"><path d="M3 9H10" stroke="currentColor" strokeWidth="2" /></svg>
          <svg width="12" height="12" fill="none" stroke="currentColor" strokeWidth="1.300"><path d="M3 5H8.500V10.500H3ZM5.500 5V2H11V7.500H8.500" /></svg>
          <svg width="12" height="12"><path d="M2 2L10 10M10 2L2 10" stroke="currentColor" strokeWidth="1.400" /></svg>
        </WindowButtons>
      </TitleBar>
      <BrandBar>
        <Logo><LogoText $size={19.800} $top={11}>wysiwyg</LogoText><Swarm w={37} /></Logo>
        <Tabs>
          {tabs.map((t) => (
            <Tab key={t} $active={t === "LIVE"}>
              {t}
              <svg width="8" height="8"><path d="M0.500 0.500H7.500L4 7.500Z" fill="#f2f2f2" /></svg>
            </Tab>
          ))}
        </Tabs>
        <LogoText $size={23} $top={6}>perform</LogoText>
      </BrandBar>

      <MenuBar>
        <EdgeGrip $h={20} $gap={9.500} />
        {menus.map(([m, w]) => <MenuItem key={m} $w={w}>{m}</MenuItem>)}
      </MenuBar>
      <Toolbar $h={42}>
        <EdgeGrip $h={34} $gap={1} />
        <Btns list={["fresh", "open", "save"]} /><Sep />
        <Btns list={["preview", "print"]} /><Grip /><Btn n="cubegear" /><Sep />
        <Btns list={["cut", "copy", "paste", "del"]} /><Sep $w={9} />
        <Btns list={["undo", "redo", "reload"]} />
      </Toolbar>
      <Toolbar $h={41}>
        <EdgeGrip $h={34} $gap={2} />
        <ToolButton $boxed><Cube face="top" /></ToolButton>
        <ToolButton><Cube face="backLeft" back /></ToolButton>
        <ToolButton><Cube face="right" /></ToolButton>
        <ToolButton><Cube face="left" /></ToolButton>
        <ToolButton><Cube face="backRight" back /></ToolButton>
        <Btn n="solid" /><Sep />
        <Btn n="viewTop" boxed /><Btns list={["viewFront", "viewSide"]} /><Sep />
        <Btns list={["boxA", "boxB", "snapPt", "snapLine", "snapEnd", "snapX", "snapC", "grab", "pen", "truss", "pipe", "shape"]} /><Sep />
        {["X", "Y", "Z"].map((c) => <ToolButton key={c}><Letter>{c}</Letter></ToolButton>)}<Sep />
        <Btns list={["lift", "mouse", "grid"]} /><Btn n="pickCone" boxed /><Sep $w={8} />
        <Btn n="stage" boxed />
      </Toolbar>
      <Toolbar $h={39}>
        <EdgeGrip $h={34} $gap={3} />
        <DeviceSelect>
          &lt;All Devices&gt;
          <svg width="7" height="5"><path d="M0 0.500H7L3.500 4.500Z" fill="#a5a5a7" /></svg>
        </DeviceSelect>
        <Btns list={["plug", "unplug", "gear"]} /><Grip /><Btn n="cursor100" /><Sep $w={9} />
        <Btns list={["intensity", "pan", "iris", "beam", "rgb", "gobo", "fan", "film"]} /><Sep />
        <Btns list={["camera", "number"]} />
      </Toolbar>
      <ToolbarFoot />

      <Work>
        <Sidebar>
          <SidebarTitle>Views</SidebarTitle>
          <SidebarBody><Dots /></SidebarBody>
          <NavList>
            {navLabels.map((l, i) => (
              <NavRow key={l} $active={i === 1}><Svg s={19}>{navIcons[i]}</Svg>{l}</NavRow>
            ))}
          </NavList>
          <SidebarFoot />
        </Sidebar>
        <Splitter />
        <Main>
          <StatusBar>
            <span>No connected devices...</span>
            <ProfileLabel>Shaded View Profile: Default</ProfileLabel>
          </StatusBar>
          <Quad>
            <Pane>
              <PlanView />
              <VScroll><Arrow dir="up" /><Space /><Arrow dir="down" /></VScroll>
              <HScroll><Arrow dir="left" /><Space $n={400} /><Thumb $w={20} $h={11} /><Space /><Arrow dir="right" /></HScroll>
            </Pane>
            <Pane>
              <SideView />
              <VScroll><Arrow dir="up" /><Space $n={293} /><Thumb $w={10} $h={19} /><Space /><Arrow dir="down" /></VScroll>
              <HScroll><Arrow dir="left" /><Space $n={465} /><Thumb $w={20} $h={11} /><Space /><Arrow dir="right" /></HScroll>
            </Pane>
            <Pane>
              <FrontView />
              <VScroll><Arrow dir="up" /><Space $n={293} /><Thumb $w={10} $h={19} /><Space /><Arrow dir="down" /></VScroll>
              <HScroll><Arrow dir="left" /><Space $n={439} /><Thumb $w={20} $h={11} /><Space /><Arrow dir="right" /></HScroll>
            </Pane>
            <ActivePane><ShadedView /></ActivePane>
          </Quad>
        </Main>
        <RightRail><RailTab>Shaded View Settings</RailTab><RailEdge /></RightRail>
      </Work>

      <Floating>
        <FloatTitle>
          <svg width="17" height="14"><rect width="17" height="14" rx="1" fill="#dfeae8" /><rect x="2" y="3" width="7" height="9" fill="#3d7f7a" /><path d="M9 3H12V12H9Z" fill="#fff" /></svg>
          <span>Live Quad Flat (1)</span>
          <svg width="64" height="18">
            <path d="M0 12L5.500 5.500L11 12Z" fill="#fff" />
            <path d="M20 4V1.500H22M35 1.500H37V4M37 13V15.500H35M22 15.500H20V13" stroke="#c4c4c4" strokeWidth="1.300" fill="none" />
            <path d="M51 4.500L60.500 14M60.500 4.500L51 14" stroke="#fff" strokeWidth="2.600" />
          </svg>
        </FloatTitle>
        <FloatBody><MiniView /></FloatBody>
      </Floating>
      <Pointer width="20" height="22">
        <path d="M1 1H8L6.500 4L13 12.500L17 11.500V19.500H9.500L11.500 15L5 6L1 8Z" fill="#fff" stroke="#222" strokeWidth="1" />
      </Pointer>
    </AppFrame>
  );
}
